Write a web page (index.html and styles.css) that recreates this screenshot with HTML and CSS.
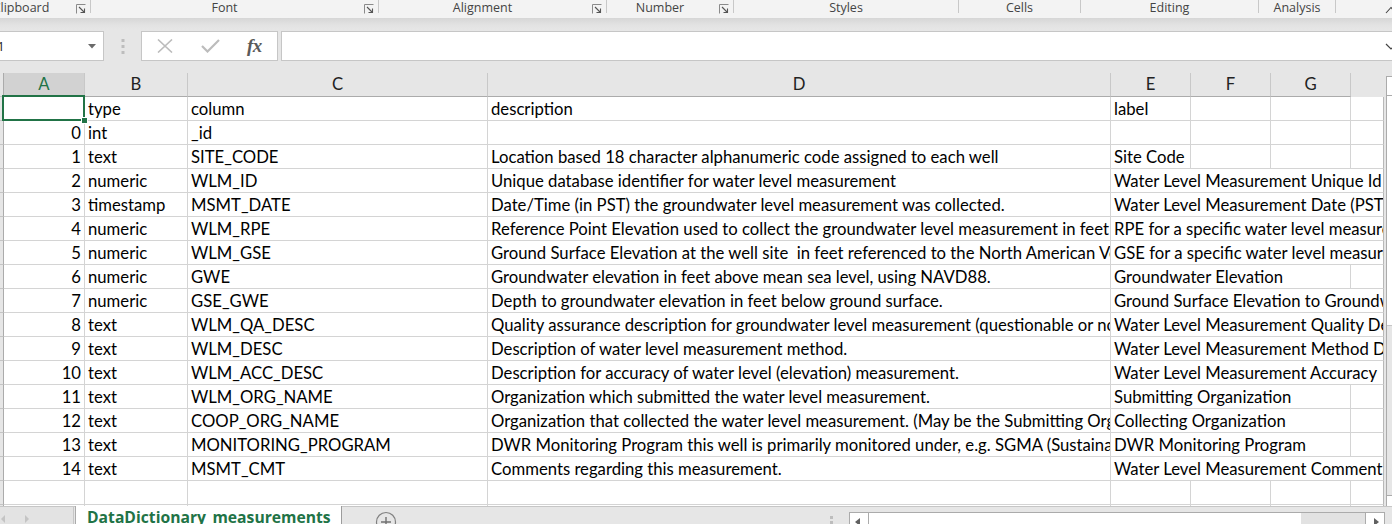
FILE: index.html
```html
<!DOCTYPE html>
<html lang="en">
<head>
<meta charset="utf-8">
<title>DataDictionary_measurements</title>
<link rel="stylesheet" href="styles.css">
</head>
<body>
<div class="ribbon">
  <div class="group g-clip"><span class="glabel">Clipboard</span><span class="launch"><svg width="10" height="10" viewBox="0 0 10 10"><path d="M0.5 9.5V0.5H9.5" fill="none" stroke="#8a8a8a"/><path d="M3 3L8.5 8.5M8.5 4.5V8.5H4.5" fill="none" stroke="#555" stroke-width="1.1"/></svg></span></div>
  <div class="sep"></div>
  <div class="group g-font"><span class="glabel">Font</span><span class="launch"><svg width="10" height="10" viewBox="0 0 10 10"><path d="M0.5 9.5V0.5H9.5" fill="none" stroke="#8a8a8a"/><path d="M3 3L8.5 8.5M8.5 4.5V8.5H4.5" fill="none" stroke="#555" stroke-width="1.1"/></svg></span></div>
  <div class="sep"></div>
  <div class="group g-align"><span class="glabel">Alignment</span><span class="launch"><svg width="10" height="10" viewBox="0 0 10 10"><path d="M0.5 9.5V0.5H9.5" fill="none" stroke="#8a8a8a"/><path d="M3 3L8.5 8.5M8.5 4.5V8.5H4.5" fill="none" stroke="#555" stroke-width="1.1"/></svg></span></div>
  <div class="sep"></div>
  <div class="group g-num"><span class="glabel">Number</span><span class="launch"><svg width="10" height="10" viewBox="0 0 10 10"><path d="M0.5 9.5V0.5H9.5" fill="none" stroke="#8a8a8a"/><path d="M3 3L8.5 8.5M8.5 4.5V8.5H4.5" fill="none" stroke="#555" stroke-width="1.1"/></svg></span></div>
  <div class="sep"></div>
  <div class="group g-styles"><span class="glabel">Styles</span></div>
  <div class="sep"></div>
  <div class="group g-cells"><span class="glabel">Cells</span></div>
  <div class="sep"></div>
  <div class="group g-edit"><span class="glabel">Editing</span></div>
  <div class="sep"></div>
  <div class="group g-anal"><span class="glabel">Analysis</span></div>
  <div class="sep"></div>
  <div class="ribbon-end"><svg class="collapse" width="12" height="8" viewBox="0 0 12 8"><path d="M1 7L6 1.5L11 7" fill="none" stroke="#444" stroke-width="1.1"/></svg></div>
</div>
<div class="ribbon-shadow"></div>

<div class="fbar">
  <div class="namebox"><span class="nb-text">A1</span><svg width="8" height="5" viewBox="0 0 8 5"><path d="M0 0H8L4 4.5Z" fill="#6a6a6a"/></svg></div>
  <div class="grip"><svg width="4" height="15" viewBox="0 0 4 15"><rect x="0.5" y="0" width="3" height="3" fill="#bdbdbd"/><rect x="0.5" y="6" width="3" height="3" fill="#bdbdbd"/><rect x="0.5" y="12" width="3" height="3" fill="#bdbdbd"/></svg></div>
  <div class="fxbox">
    <svg class="fx-x" width="16" height="14" viewBox="0 0 16 14"><path d="M1 0.5L15 13.5M15 0.5L1 13.5" stroke="#bcbcbc" stroke-width="1.6"/></svg>
    <svg class="fx-ok" width="19" height="14" viewBox="0 0 19 14"><path d="M1 7L6.5 12.5L18 1" fill="none" stroke="#bcbcbc" stroke-width="2.2"/></svg>
    <span class="fx">fx</span>
  </div>
  <div class="finput"><svg class="fchev" width="12" height="7" viewBox="0 0 12 7"><path d="M1 1L6 6L11 1" fill="none" stroke="#444" stroke-width="1.2"/></svg></div>
</div>

<div class="sheet">
  <div class="grid">
    <div class="row hdr"><div class="rh"></div><div class="ch sel">A</div><div class="ch">B</div><div class="ch">C</div><div class="ch">D</div><div class="ch">E</div><div class="ch">F</div><div class="ch">G</div><div class="ch"></div></div>

    <div class="row"><div class="rh"></div><div class="c n a1"><span class="selbox"></span><span class="handle"></span></div><div class="c">type</div><div class="c">column</div><div class="c">description</div><div class="c">label</div><div class="c"></div><div class="c"></div><div class="c"></div></div>
    <div class="row"><div class="rh"></div><div class="c n">0</div><div class="c">int</div><div class="c">_id</div><div class="c"></div><div class="c"></div><div class="c"></div><div class="c"></div><div class="c"></div></div>
    <div class="row"><div class="rh"></div><div class="c n">1</div><div class="c">text</div><div class="c">SITE_CODE</div><div class="c">Location based 18 character alphanumeric code assigned to each well</div><div class="c">Site Code</div><div class="c"></div><div class="c"></div><div class="c"></div></div>
    <div class="row"><div class="rh"></div><div class="c n">2</div><div class="c">numeric</div><div class="c">WLM_ID</div><div class="c">Unique database identifier for water level measurement</div><div class="c s4">Water Level Measurement Unique Id</div></div>
    <div class="row"><div class="rh"></div><div class="c n">3</div><div class="c">timestamp</div><div class="c">MSMT_DATE</div><div class="c">Date/Time (in PST) the groundwater level measurement was collected.</div><div class="c s4">Water Level Measurement Date (PST</div></div>
    <div class="row"><div class="rh"></div><div class="c n">4</div><div class="c">numeric</div><div class="c">WLM_RPE</div><div class="c">Reference Point Elevation used to collect the groundwater level measurement in feet</div><div class="c s4">RPE for a specific water level measure</div></div>
    <div class="row"><div class="rh"></div><div class="c n">5</div><div class="c">numeric</div><div class="c">WLM_GSE</div><div class="c">Ground Surface Elevation at the well site  in feet referenced to the North American Ve</div><div class="c s4">GSE for a specific water level measure</div></div>
    <div class="row"><div class="rh"></div><div class="c n">6</div><div class="c">numeric</div><div class="c">GWE</div><div class="c">Groundwater elevation in feet above mean sea level, using NAVD88.</div><div class="c s3">Groundwater Elevation</div><div class="c"></div></div>
    <div class="row"><div class="rh"></div><div class="c n">7</div><div class="c">numeric</div><div class="c">GSE_GWE</div><div class="c">Depth to groundwater elevation in feet below ground surface.</div><div class="c s4">Ground Surface Elevation to Groundwa</div></div>
    <div class="row"><div class="rh"></div><div class="c n">8</div><div class="c">text</div><div class="c">WLM_QA_DESC</div><div class="c">Quality assurance description for groundwater level measurement (questionable or no</div><div class="c s4">Water Level Measurement Quality Des</div></div>
    <div class="row"><div class="rh"></div><div class="c n">9</div><div class="c">text</div><div class="c">WLM_DESC</div><div class="c">Description of water level measurement method.</div><div class="c s4">Water Level Measurement Method De</div></div>
    <div class="row"><div class="rh"></div><div class="c n">10</div><div class="c">text</div><div class="c">WLM_ACC_DESC</div><div class="c">Description for accuracy of water level (elevation) measurement.</div><div class="c s4">Water Level Measurement Accuracy</div></div>
    <div class="row"><div class="rh"></div><div class="c n">11</div><div class="c">text</div><div class="c">WLM_ORG_NAME</div><div class="c">Organization which submitted the water level measurement.</div><div class="c s3">Submitting Organization</div><div class="c"></div></div>
    <div class="row"><div class="rh"></div><div class="c n">12</div><div class="c">text</div><div class="c">COOP_ORG_NAME</div><div class="c">Organization that collected the water level measurement. (May be the Submitting Org</div><div class="c s3">Collecting Organization</div><div class="c"></div></div>
    <div class="row"><div class="rh"></div><div class="c n">13</div><div class="c">text</div><div class="c">MONITORING_PROGRAM</div><div class="c">DWR Monitoring Program this well is primarily monitored under, e.g. SGMA (Sustainab</div><div class="c s3">DWR Monitoring Program</div><div class="c"></div></div>
    <div class="row"><div class="rh"></div><div class="c n">14</div><div class="c">text</div><div class="c">MSMT_CMT</div><div class="c">Comments regarding this measurement.</div><div class="c s4">Water Level Measurement Comment</div></div>
    <div class="row"><div class="rh"></div><div class="c n"></div><div class="c"></div><div class="c"></div><div class="c"></div><div class="c"></div><div class="c"></div><div class="c"></div><div class="c"></div></div>
    <div class="row"><div class="rh"></div><div class="c n"></div><div class="c"></div><div class="c"></div><div class="c"></div><div class="c"></div><div class="c"></div><div class="c"></div><div class="c"></div></div>
  </div>
  <div class="vscroll"><div class="vs-up"></div><div class="vs-thumb"></div><div class="vs-track"></div><div class="vs-down"></div></div>
</div>

<div class="tabbar">
  <div class="tabs">
    <div class="tabnav"><svg width="40" height="10" viewBox="0 0 40 10"><path d="M9 3L5 7L9 11Z" fill="#c4c4c4"/><path d="M29 3L33 7L29 11Z" fill="#c4c4c4"/></svg></div>
    <div class="tab">DataDictionary_measurements</div>
    <div class="addsheet"><svg width="22" height="22" viewBox="0 0 22 22"><circle cx="11" cy="11" r="9.5" fill="none" stroke="#808080" stroke-width="1.2"/><path d="M11 6V16M6 11H16" stroke="#707070" stroke-width="1.4"/></svg></div>
  </div>
  <div class="hgrip"><svg width="4" height="12" viewBox="0 0 4 12"><rect x="0" y="3" width="3" height="3" fill="#bdbdbd"/><rect x="0" y="8" width="3" height="3" fill="#bdbdbd"/></svg></div>
  <div class="hscroll">
    <div class="hs-left"><svg width="6" height="8" viewBox="0 0 6 8"><path d="M5 0V8L0 4Z" fill="#606060"/></svg></div>
    <div class="hs-thumb"></div>
    <div class="hs-track"></div>
    <div class="hs-right"><svg width="6" height="8" viewBox="0 0 6 8"><path d="M1 0V8L6 4Z" fill="#606060"/></svg></div>
  </div>
</div>
</body>
</html>
```

FILE: styles.css
```css
* { box-sizing: border-box; margin: 0; padding: 0; }

html, body {
  width: 1392px;
  height: 524px;
  overflow: hidden;
}

body {
  background: #e6e6e6;
  font-family: "Open Sans", "Noto Sans", sans-serif;
  color: #000;
}

/* ---------- ribbon group labels ---------- */
.ribbon {
  display: flex;
  height: 18px;
  width: 1420px;
  margin-left: -28px;
  background: #f3f3f3;
}
.group { display: flex; height: 18px; flex: none; }
.glabel {
  flex: 1;
  text-align: center;
  font-size: 12.5px;
  line-height: 16px;
  color: #444;
  white-space: nowrap;
}
.launch { width: 20px; flex: none; padding: 4px 0 0 6px; }
.launch svg { display: block; }
.sep { width: 1px; height: 13px; background: #c8c8c8; flex: none; }
.g-clip { width: 118px; }
.g-font { width: 287px; }
.g-align { width: 227px; }
.g-num { width: 126px; }
.g-styles { width: 224px; }
.g-cells { width: 121px; }
.g-edit { width: 177px; }
.g-anal { width: 76px; }
.ribbon-end { flex: 1; display: flex; justify-content: flex-end; padding-top: 6px; }
.collapse { display: block; margin-right: -5px; }

.ribbon-shadow {
  height: 12px;
  background: linear-gradient(#d6d6d6, #e3e3e3 60%, #e6e6e6);
}

/* ---------- formula bar ---------- */
.fbar {
  display: flex;
  align-items: flex-start;
  height: 43px;
  padding-top: 1px;
}
.namebox {
  flex: none;
  width: 124px;
  height: 30px;
  margin-left: -20px;
  background: #fff;
  border: 1px solid #c6c6c6;
  display: flex;
  align-items: center;
  justify-content: space-between;
  padding: 0 7px 0 8px;
  font-size: 13px;
  color: #222;
}
.nb-text { line-height: 28px; }
.namebox svg { display: block; }
.grip {
  flex: none;
  width: 37px;
  height: 30px;
  display: flex;
  align-items: center;
  justify-content: center;
}
.grip svg { display: block; margin-left: 1px; }
.fxbox {
  flex: none;
  width: 137px;
  height: 30px;
  background: #fff;
  border: 1px solid #c6c6c6;
  display: flex;
  align-items: center;
}
.fx-x { display: block; margin-left: 15px; }
.fx-ok { display: block; margin-left: 28px; }
.fx {
  margin-left: 27px;
  font-family: "Liberation Serif", "DejaVu Serif", serif;
  font-style: italic;
  font-weight: bold;
  font-size: 19px;
  line-height: 26px;
  color: #5a5a5a;
  letter-spacing: -0.5px;
}
.finput {
  flex: none;
  width: 1121px;
  height: 30px;
  margin-left: 3px;
  background: #fff;
  border: 1px solid #c6c6c6;
  display: flex;
  align-items: center;
}
.fchev { display: block; margin-left: 1103px; }

/* ---------- sheet grid ---------- */
.sheet {
  display: flex;
  height: 433px;
  overflow: hidden;
}
.grid {
  flex: none;
  width: 1384px;
  height: 433px;
  overflow: hidden;
  background: #fff;
}
.row {
  display: grid;
  grid-template-columns: 4px 81px 103px 300px 623px 80px 80px 80px 33px;
  height: 24px;
}
.hdr { background: #e6e6e6; }
.rh {
  background: #e6e6e6;
  border-right: 1px solid #ababab;
  border-bottom: 1px solid #c4c4c4;
}
.ch {
  border-right: 1px solid #c8c8c8;
  border-bottom: 1px solid #ababab;
  text-align: center;
  font-family: "Lato", "Liberation Sans", sans-serif;
  font-size: 16.7px;
  line-height: 23px;
  color: #222;
}
.hdr > .ch:last-child { border-right-color: transparent; border-bottom-color: transparent; }
.ch.sel {
  background: #d2d2d2;
  color: #217346;
}
.c {
  position: relative;
  border-right: 1px solid #d4d4d4;
  border-bottom: 1px solid #d4d4d4;
  padding: 2px 0 0 3px;
  font-family: "Lato", "Liberation Sans", sans-serif;
  font-size: 16.7px;
  line-height: 21px;
  color: #000;
  white-space: pre;
  overflow: hidden;
}
.row > .c:last-child { border-right-color: #b8b8b8; }
.n { text-align: right; padding: 2px 3px 0 0; }
.s4 { grid-column: span 4; }
.s3 { grid-column: span 3; }

.a1 { overflow: visible; z-index: 2; }
.selbox {
  position: absolute;
  left: -2px;
  top: -2px;
  width: 83px;
  height: 26px;
  border: 2px solid #217346;
}
.handle {
  position: absolute;
  left: 77px;
  top: 20px;
  width: 7px;
  height: 7px;
  background: #217346;
  border: 1px solid #fff;
}

/* ---------- vertical scrollbar ---------- */
.vscroll {
  flex: none;
  width: 10px;
  height: 440px;
  margin: 3px 0 0 2px;
  border: 1px solid #ababab;
  display: flex;
  flex-direction: column;
}
.vs-up { height: 19px; background: #fff; border-bottom: 1px solid #ababab; flex: none; }
.vs-thumb { height: 230px; background: #fff; border-bottom: 1px solid #c6c6c6; flex: none; }
.vs-track { flex: 1; background: #e6e6e6; }
.vs-down { height: 20px; background: #fff; border-top: 1px solid #ababab; flex: none; }

/* ---------- sheet tabs ---------- */
.tabbar {
  display: flex;
  align-items: flex-start;
  height: 18px;
  border-top: 1px solid #c6c6c6;
  background: #e6e6e6;
}
.tabs { display: flex; align-items: flex-start; width: 830px; flex: none; }
.tabnav {
  flex: none;
  width: 74px;
  height: 24px;
  background: #e3e3e3;
  border-right: 1px solid #c6c6c6;
  padding-top: 5px;
}
.tabnav svg { display: block; margin-left: -4px; overflow: visible; }
.tab {
  flex: none;
  width: 267px;
  height: 24px;
  margin: -1px 0 0 1px;
  background: #fff;
  border-left: 1px solid #ababab;
  border-right: 1px solid #9c9c9c;
  padding: 1px 0 0 11px;
  font-family: "Open Sans", sans-serif;
  font-weight: bold;
  font-size: 15.7px;
  line-height: 20px;
  color: #217346;
  white-space: nowrap;
}
.addsheet { flex: none; padding: 4px 0 0 33px; }
.addsheet svg { display: block; }
.hgrip { flex: none; width: 19px; padding-top: 6px; }
.hgrip svg { display: block; }
.hscroll {
  flex: none;
  width: 536px;
  height: 22px;
  margin-top: 5px;
  border: 1px solid #ababab;
  display: flex;
  background: #fff;
}
.hs-left {
  flex: none;
  width: 19px;
  border-right: 1px solid #ababab;
  padding: 5px 0 0 5px;
}
.hs-left svg, .hs-right svg { display: block; }
.hs-thumb { flex: none; width: 432px; background: #fff; }
.hs-track { flex: 1; background: #e2e2e2; }
.hs-right {
  flex: none;
  width: 19px;
  border-left: 1px solid #ababab;
  padding: 5px 0 0 7px;
}
```
